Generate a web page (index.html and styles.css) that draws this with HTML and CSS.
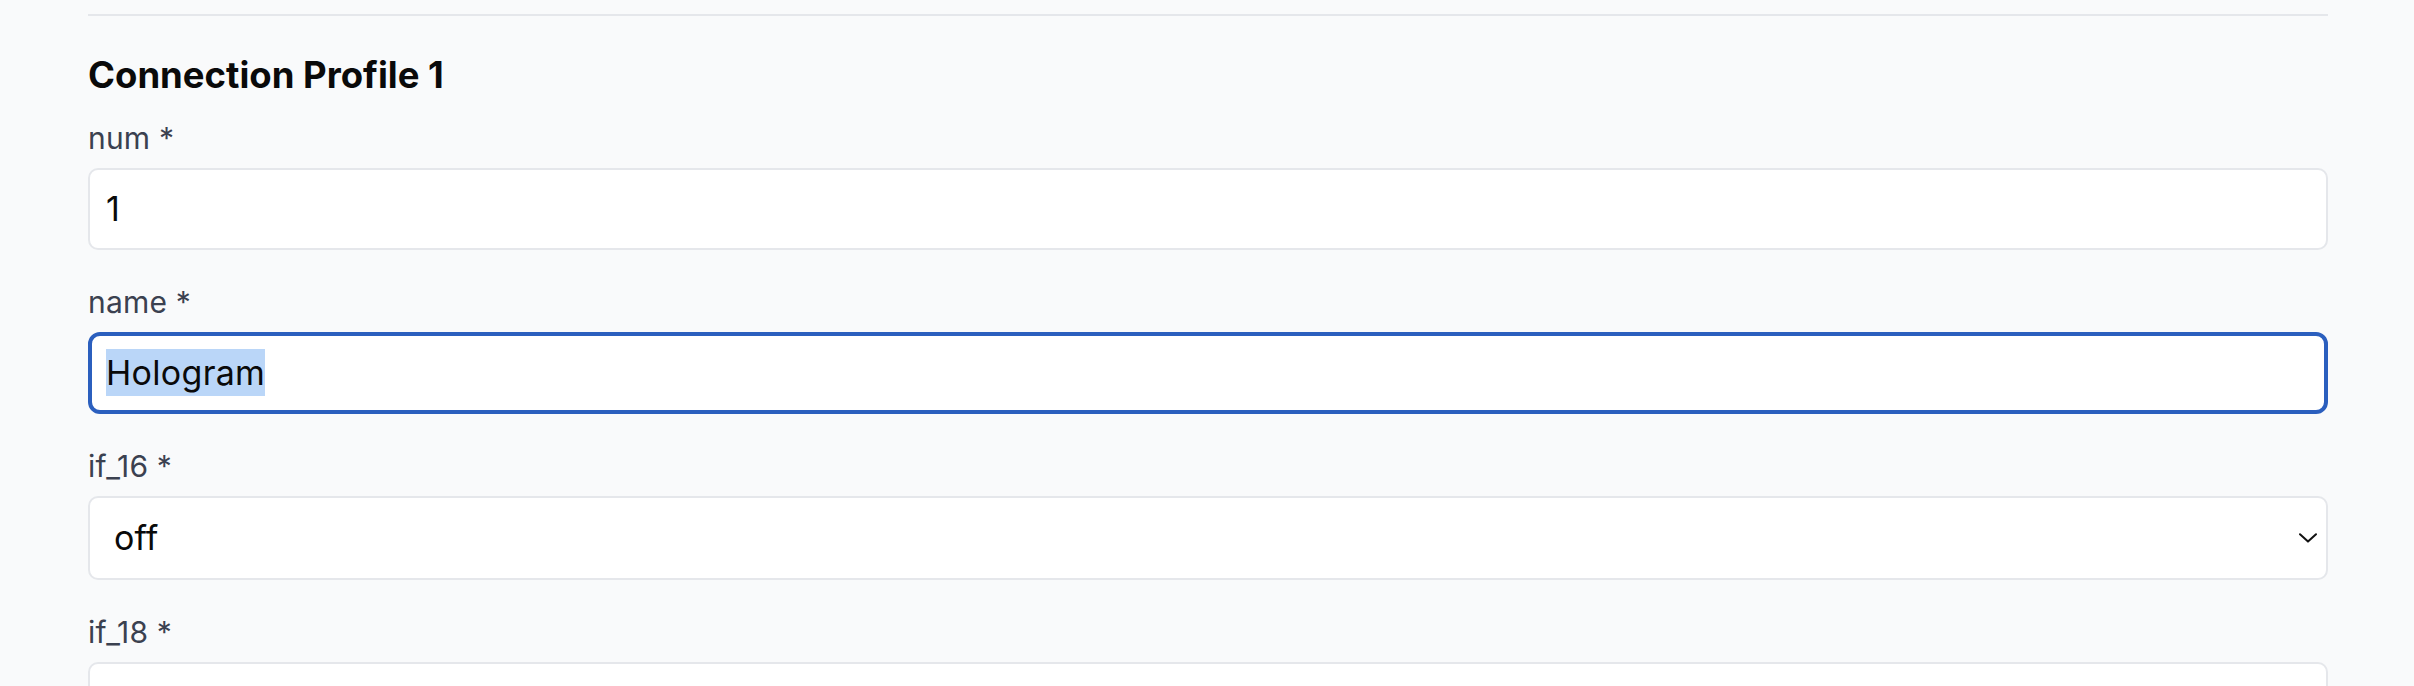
FILE: index.html
```html
<!DOCTYPE html>
<html lang="en">
<head>
<meta charset="utf-8">
<title>Connection Profile 1</title>
<link rel="stylesheet" href="styles.css">
</head>
<body>
<main class="page">
  <hr class="divider">
  <h2 class="section-title">Connection Profile 1</h2>
  <form class="form">
    <div class="field">
      <label class="label">num *</label>
      <div class="control"><span class="value">1</span></div>
    </div>
    <div class="field">
      <label class="label">name *</label>
      <div class="control focused"><span class="value"><span class="selected">Hologram</span></span></div>
    </div>
    <div class="field">
      <label class="label">if_16 *</label>
      <div class="control select">
        <span class="value">off</span>
        <svg class="chevron" viewBox="0 0 18 10" width="18" height="10" aria-hidden="true">
          <path d="M1 1.2 L9 8.6 L17 1.2" fill="none" stroke="#111" stroke-width="2" stroke-linecap="round" stroke-linejoin="round"/>
        </svg>
      </div>
    </div>
    <div class="field">
      <label class="label">if_18 *</label>
      <div class="control select"><span class="value"></span></div>
    </div>
  </form>
</main>
</body>
</html>
```

FILE: styles.css
```css
html, body {
  margin: 0;
  padding: 0;
  overflow: hidden;
  background: #f9fafb;
}

body {
  font-family: "Inter", "Noto Sans", sans-serif;
  color: #111111;
}

.page {
  padding: 14px 86px 0 88px;
}

.divider {
  margin: 0;
  border: 0;
  border-top: 2px solid #e5e7eb;
  height: 0;
}

.section-title {
  margin: 37px 0 0 0;
  font-size: 36.5px;
  line-height: 44px;
  font-weight: 700;
  color: #0a0a0a;
  letter-spacing: 0;
}

.form {
  display: flex;
  flex-direction: column;
  gap: 32px;
  margin-top: 21px;
}

.field {
  display: flex;
  flex-direction: column;
  gap: 10px;
}

.label {
  font-size: 30px;
  line-height: 40px;
  color: #3b4150;
  letter-spacing: 0.2px;
}

.control {
  box-sizing: border-box;
  height: 82px;
  background: #ffffff;
  border: 2px solid #e5e7eb;
  border-radius: 10px;
  padding: 0 16px;
  display: flex;
  align-items: center;
}

.value {
  font-size: 34px;
  line-height: 40px;
  color: #0a0a0a;
}

.control.focused {
  border: 4px solid #2b5fbe;
  border-radius: 12px;
  padding: 0 14px;
}

.selected {
  background: #bad6f8;
  padding: 3px 0 3px 0;
  letter-spacing: 0.3px;
}

.control.select {
  height: 84px;
  padding: 0 9px 0 24px;
  justify-content: space-between;
}

.chevron {
  display: block;
  flex: none;
}
```
